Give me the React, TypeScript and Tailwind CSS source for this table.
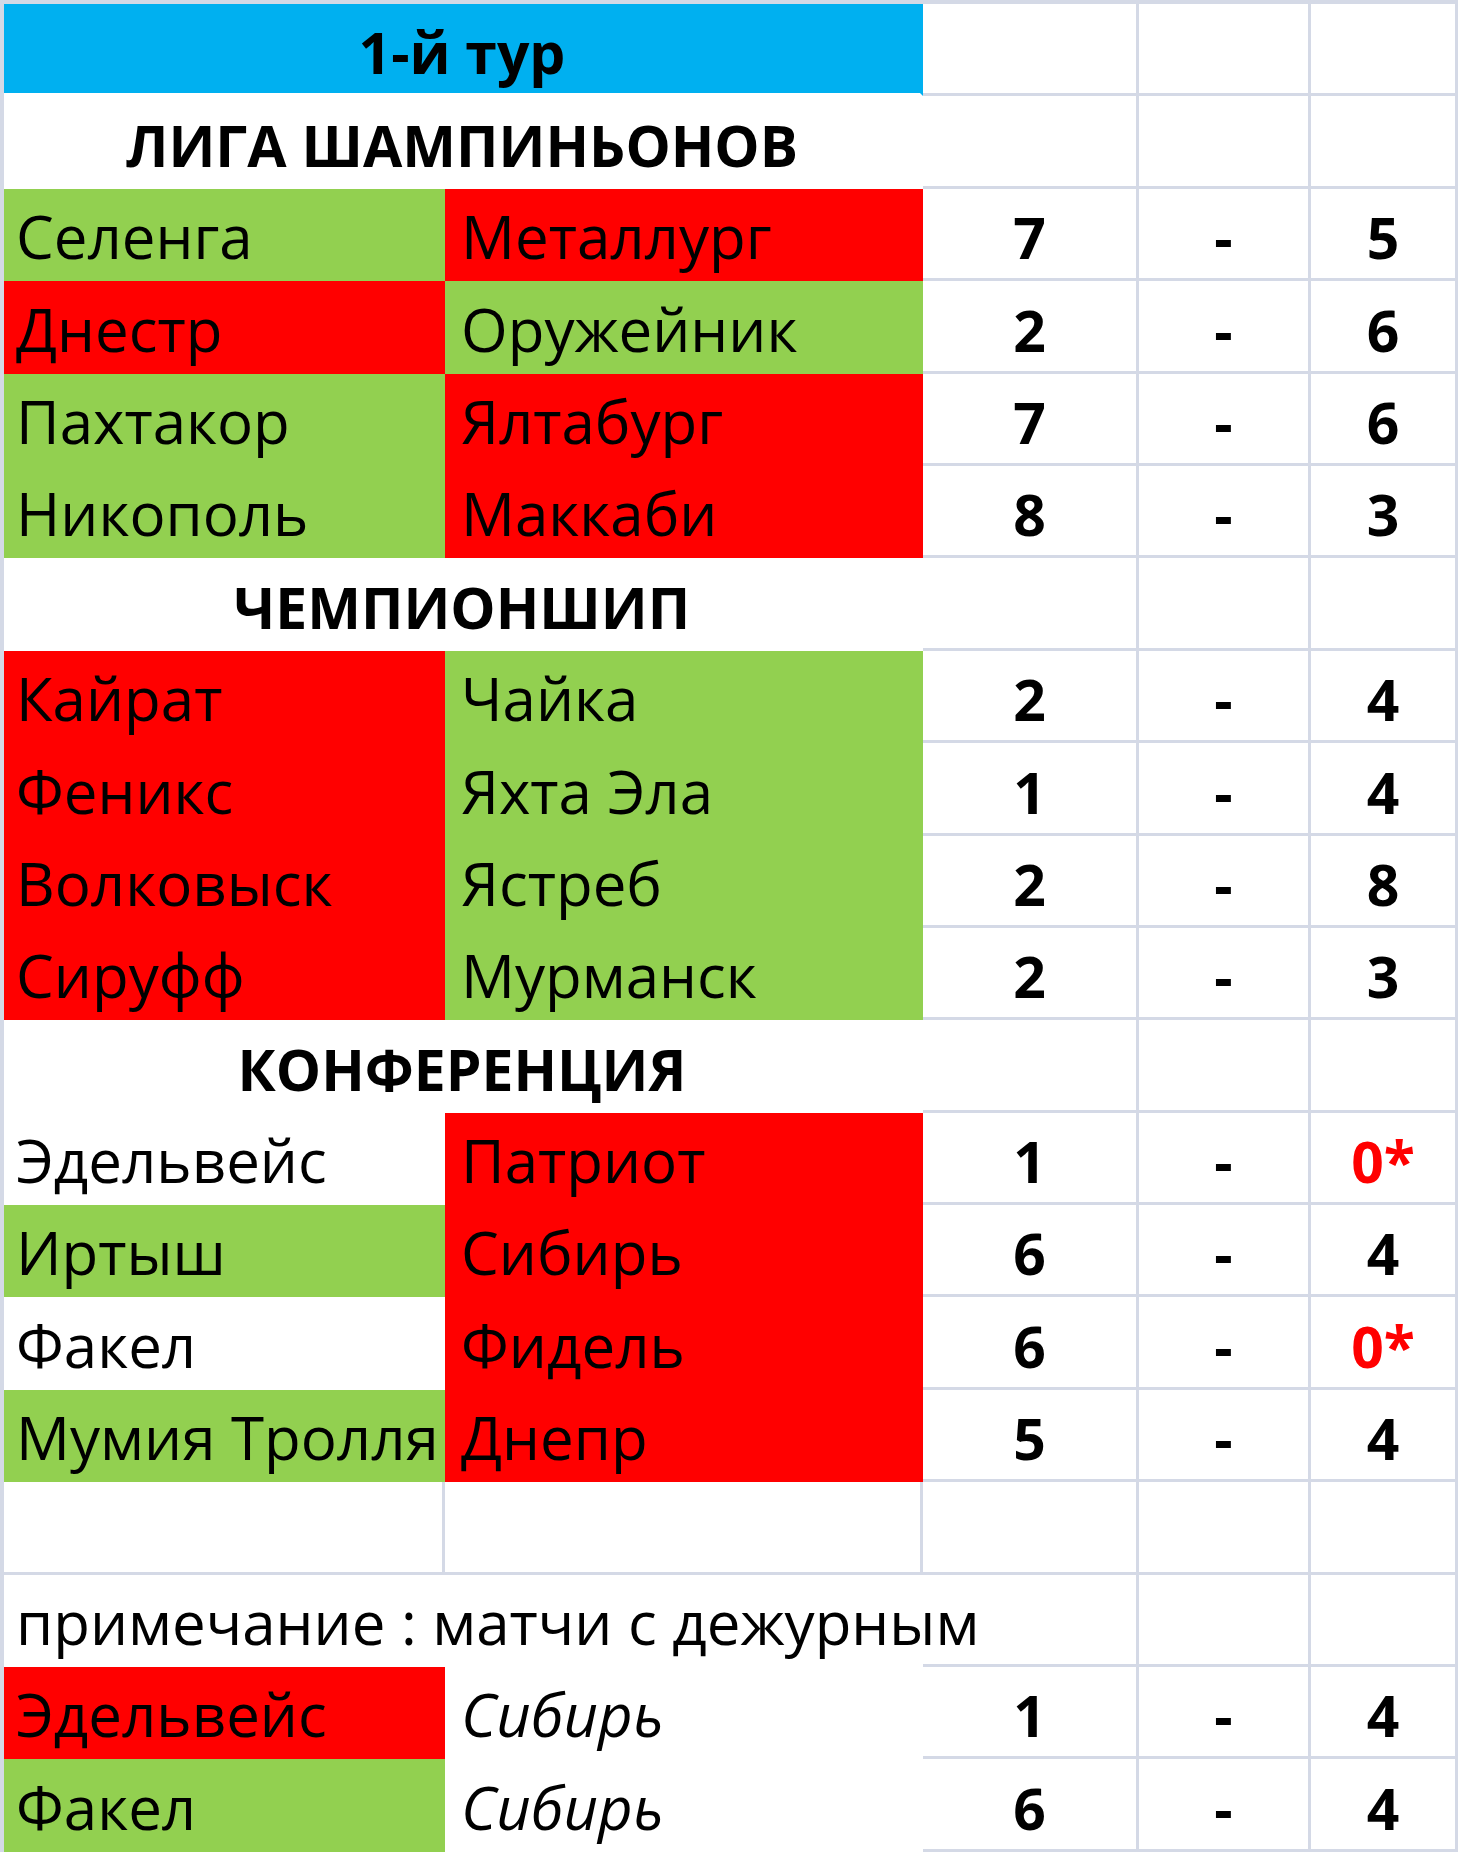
import React from "react";

type Fill = "green" | "red" | "white" | "blue" | "none" | "clear";

const fillClass: Record<Fill, string> = {
  green: "bg-[#92d050] border-[#92d050]",
  red: "bg-[#ff0000] border-[#ff0000]",
  white: "bg-white border-white",
  blue: "bg-[#00b0f0] border-r-[#00b0f0] border-b-white",
  none: "bg-white border-[#d4d9e6]",
  clear: "bg-transparent border-[#d4d9e6]",
};

interface CellProps {
  fill?: Fill;
  span?: boolean;
  align?: "left" | "leftB" | "center";
  bold?: boolean;
  italic?: boolean;
  red?: boolean;
  children?: React.ReactNode;
}

function Cell({
  fill = "none",
  span,
  align = "center",
  bold,
  italic,
  red,
  children,
}: CellProps) {
  return (
    <div
      className={[
        "flex items-end border-r-[3px] border-b-[3px] pb-[12px] whitespace-nowrap leading-none",
        fillClass[fill],
        span ? "col-span-2" : "",
        align === "center" ? "justify-center" : align === "leftB" ? "pl-4" : "pl-3",
        bold ? "font-bold text-[57px]" : "font-medium text-[60px]",
        italic ? "italic" : "",
        red ? "text-[#ff0000]" : "text-black",
      ].join(" ")}
    >
      {children}
    </div>
  );
}

type Match = [string, Fill, string, Fill, string, string];

const champions: Match[] = [
  ["Селенга", "green", "Металлург", "red", "7", "5"],
  ["Днестр", "red", "Оружейник", "green", "2", "6"],
  ["Пахтакор", "green", "Ялтабург", "red", "7", "6"],
  ["Никополь", "green", "Маккаби", "red", "8", "3"],
];

const championship: Match[] = [
  ["Кайрат", "red", "Чайка", "green", "2", "4"],
  ["Феникс", "red", "Яхта Эла", "green", "1", "4"],
  ["Волковыск", "red", "Ястреб", "green", "2", "8"],
  ["Сируфф", "red", "Мурманск", "green", "2", "3"],
];

const conference: Match[] = [
  ["Эдельвейс", "white", "Патриот", "red", "1", "0*"],
  ["Иртыш", "green", "Сибирь", "red", "6", "4"],
  ["Факел", "white", "Фидель", "red", "6", "0*"],
  ["Мумия Тролля", "green", "Днепр", "red", "5", "4"],
];

const duty: Match[] = [
  ["Эдельвейс", "red", "Сибирь", "white", "1", "4"],
  ["Факел", "green", "Сибирь", "white", "6", "4"],
];

function MatchRow({ m, italicAway }: { m: Match; italicAway?: boolean }) {
  const [home, hf, away, af, a, b] = m;
  return (
    <>
      <Cell fill={hf} align="left">
        {home}
      </Cell>
      <Cell fill={af} align="leftB" italic={italicAway}>
        {away}
      </Cell>
      <Cell bold>{a}</Cell>
      <Cell bold>-</Cell>
      <Cell bold red={b.includes("*")}>
        {b}
      </Cell>
    </>
  );
}

function Heading({ title, fill = "white" }: { title: string; fill?: Fill }) {
  return (
    <>
      <Cell fill={fill} span bold>
        {title}
      </Cell>
      <Cell />
      <Cell />
      <Cell />
    </>
  );
}

export default function App() {
  return (
    <div
      className="h-[1853px] w-[1460px] overflow-hidden bg-white"
      style={{ fontFamily: '"Open Sans", "Noto Sans", sans-serif' }}
    >
      <div className="grid w-[1458px] grid-cols-[441px_478px_216px_172px_147px] auto-rows-[92.4px] border-l-4 border-t-4 border-[#d4d9e6] bg-white">
        <Heading title="1-й тур" fill="blue" />
        <Heading title="ЛИГА ШАМПИНЬОНОВ" />
        {champions.map((m) => (
          <MatchRow key={m[0]} m={m} />
        ))}
        <Heading title="ЧЕМПИОНШИП" />
        {championship.map((m) => (
          <MatchRow key={m[0]} m={m} />
        ))}
        <Heading title="КОНФЕРЕНЦИЯ" />
        {conference.map((m) => (
          <MatchRow key={m[0]} m={m} />
        ))}

        {/* empty row */}
        <Cell />
        <Cell />
        <Cell />
        <Cell />
        <Cell />

        {/* note overflows into column C */}
        <div className="relative z-10 col-span-2 flex items-end whitespace-nowrap bg-white pb-[15px] pl-3 text-[60px] font-medium leading-none text-black">
          примечание : матчи с дежурным
        </div>
        <Cell fill="clear" />
        <Cell />
        <Cell />

        {duty.map((m, i) => (
          <MatchRow key={i} m={m} italicAway />
        ))}
      </div>
    </div>
  );
}
